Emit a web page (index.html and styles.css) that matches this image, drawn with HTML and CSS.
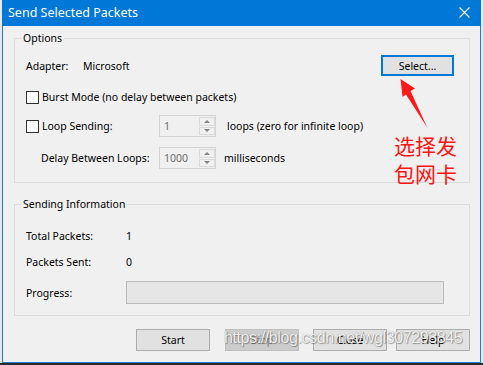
FILE: index.html
```html
<!DOCTYPE html>
<html lang="en">
<head>
    <meta charset="UTF-8">
    <meta name="viewport" content="width=device-width, initial-scale=1.0">
    <title>Send Selected Packets</title>
    <link rel="stylesheet" href="styles.css">
</head>
<body>
    <div class="window">
        <div class="titlebar">
            <span class="title">Send Selected Packets</span>
            <svg class="close-x" width="11" height="11" viewBox="0 0 11 11">
                <path d="M0.5 0.5 L10.5 10.5 M10.5 0.5 L0.5 10.5" stroke="#fff" stroke-width="1.1" fill="none"/>
            </svg>
        </div>

        <div class="client">
            <div class="group options">
                <span class="group-label">Options</span>

                <div class="row adapter-row">
                    <span class="adapter-label">Adapter:</span>
                    <span>Microsoft</span>
                    <button class="btn btn-default">Select...</button>
                </div>

                <div class="row check-row">
                    <span class="check"></span>
                    <span>Burst Mode (no delay between packets)</span>
                </div>

                <div class="row spin-row">
                    <div class="lead"><span class="check"></span>Loop Sending:</div>
                    <div class="spin">
                        <span class="spin-val">1</span>
                        <div class="spin-btns">
                            <span class="arr"><i class="tri-up"></i></span>
                            <span class="arr"><i class="tri-down"></i></span>
                        </div>
                    </div>
                    <span class="after loops">loops (zero for infinite loop)</span>
                </div>

                <div class="row spin-row delay-row">
                    <div class="lead indent">Delay Between Loops:</div>
                    <div class="spin">
                        <span class="spin-val">1000</span>
                        <div class="spin-btns">
                            <span class="arr"><i class="tri-up"></i></span>
                            <span class="arr"><i class="tri-down"></i></span>
                        </div>
                    </div>
                    <span class="after ms">milliseconds</span>
                </div>
            </div>

            <div class="group info">
                <span class="group-label">Sending Information</span>

                <div class="row info-row">
                    <span class="info-label">Total Packets:</span>
                    <span>1</span>
                </div>
                <div class="row info-row sent-row">
                    <span class="info-label">Packets Sent:</span>
                    <span>0</span>
                </div>
                <div class="row progress-row">
                    <span class="info-label">Progress:</span>
                    <div class="progress"></div>
                </div>
            </div>

            <div class="buttons">
                <button class="btn">Start</button>
                <button class="btn btn-stop" disabled>Stop</button>
                <button class="btn btn-close">Close</button>
                <button class="btn btn-help">Help</button>
            </div>
        </div>

        <!-- annotation drawn over the dialog -->
        <svg class="arrow" width="483" height="365" viewBox="0 0 483 365">
            <polygon points="399.5,79 414,88.5 409.5,91 426.5,128 405,94.5 401.5,97" fill="#ff1a1a"/>
        </svg>
        <div class="note">选择发<br>包网卡</div>
        <div class="watermark">https://blog.csdn.net/wgl307293845</div>
    </div>
    <div class="taskbar"></div>
</body>
</html>
```

FILE: styles.css
```css
body {
    margin: 0;
    padding: 0;
    background-color: #e9e9e9;
    font-family: "Noto Sans", Arial, sans-serif;
    font-size: 10.5px;
    color: #000;
    overflow: hidden;
}
.window {
    position: relative;
    margin-left: 2px;
    width: 479px;
    height: 363px;
    box-sizing: border-box;
    border: 1px solid #1a7fd6;
    border-top: none;
    background-color: #f0f0f0;
}
.titlebar {
    height: 26px;
    margin: 0 -1px;
    background-color: #0078d7;
    display: flex;
    align-items: center;
    justify-content: space-between;
    padding: 0 11px 0 6px;
}
.title {
    color: #fff;
    font-size: 12.5px;
    margin-top: -1px;
}
.close-x {
    display: block;
    margin-top: -2px;
}
.client {
    padding: 12px 10px 0 11px;
}
.group {
    position: relative;
    border: 1px solid #dcdcdc;
    padding: 16px 15px 13px 11px;
}
.group-label {
    position: absolute;
    top: -9px;
    left: 6px;
    padding: 0 2px;
    line-height: 16px;
    background-color: #f0f0f0;
}
.row {
    display: flex;
    align-items: center;
}
.adapter-row {
    height: 21px;
}
.adapter-label {
    width: 57px;
}
.check-row {
    height: 22px;
    margin-top: 10px;
}
.check {
    width: 11px;
    height: 11px;
    border: 1px solid #333;
    background-color: #fff;
    margin-right: 3px;
    flex-shrink: 0;
}
.spin-row {
    height: 22px;
    margin-top: 7px;
}
.delay-row {
    margin-top: 10px;
}
.lead {
    width: 133px;
    display: flex;
    align-items: center;
}
.indent {
    padding-left: 15px;
    box-sizing: border-box;
}
.spin {
    width: 57px;
    height: 22px;
    box-sizing: border-box;
    border: 1px solid #d4d4d4;
    display: flex;
}
.spin-val {
    flex: 1;
    color: #6d6d6d;
    padding-left: 4px;
    line-height: 20px;
}
.spin-btns {
    width: 16px;
    display: flex;
    flex-direction: column;
    padding: 1px 0;
    gap: 1px;
}
.arr {
    flex: 1;
    border: 1px solid #dadada;
    background-color: #f0f0f0;
    display: flex;
    align-items: center;
    justify-content: center;
}
.tri-up {
    border-left: 3px solid transparent;
    border-right: 3px solid transparent;
    border-bottom: 3px solid #838383;
}
.tri-down {
    border-left: 3px solid transparent;
    border-right: 3px solid transparent;
    border-top: 3px solid #838383;
}
.loops {
    margin-left: 11px;
}
.ms {
    margin-left: 8px;
}
.info {
    margin-top: 21px;
    padding-top: 21px;
    padding-bottom: 11px;
}
.info-row {
    height: 20px;
}
.sent-row {
    margin-top: 6px;
}
.info-label {
    width: 100px;
}
.progress-row {
    margin-top: 9px;
}
.progress {
    width: 318px;
    height: 23px;
    box-sizing: border-box;
    border: 1px solid #bcbcbc;
    background-color: #e6e6e6;
}
.buttons {
    display: flex;
    justify-content: flex-end;
    margin-top: 13px;
}
.btn {
    width: 74px;
    height: 22px;
    box-sizing: border-box;
    border: 1px solid #adadad;
    background-color: #e1e1e1;
    font-family: inherit;
    font-size: 10.5px;
    color: #000;
    padding: 0;
}
.btn-default {
    margin-left: auto;
    width: 73px;
    height: 21px;
    border: 2px solid #0078d7;
}
.btn-stop {
    margin-left: 15px;
    background-color: #cccccc;
    border-color: #bfbfbf;
    color: #838383;
}
.btn-close {
    margin-left: 14px;
}
.btn-help {
    margin-left: 9px;
}
.arrow {
    position: absolute;
    left: -2px;
    top: 0;
}
.note {
    position: absolute;
    left: 391px;
    top: 131px;
    font-family: "Noto Sans CJK SC", sans-serif;
    font-size: 21px;
    line-height: 28px;
    color: #ff1414;
}
.watermark {
    position: absolute;
    left: 221px;
    top: 329px;
    font-family: "Liberation Sans", Arial, sans-serif;
    font-size: 16px;
    letter-spacing: -0.4px;
    color: rgba(255, 255, 255, 0.9);
    text-shadow: 1px 1px 1px rgba(0, 0, 0, 0.3), 0 0 1px rgba(0, 0, 0, 0.4);
    white-space: nowrap;
}
.taskbar {
    height: 2px;
    background-color: #2a2a2a;
}
```
